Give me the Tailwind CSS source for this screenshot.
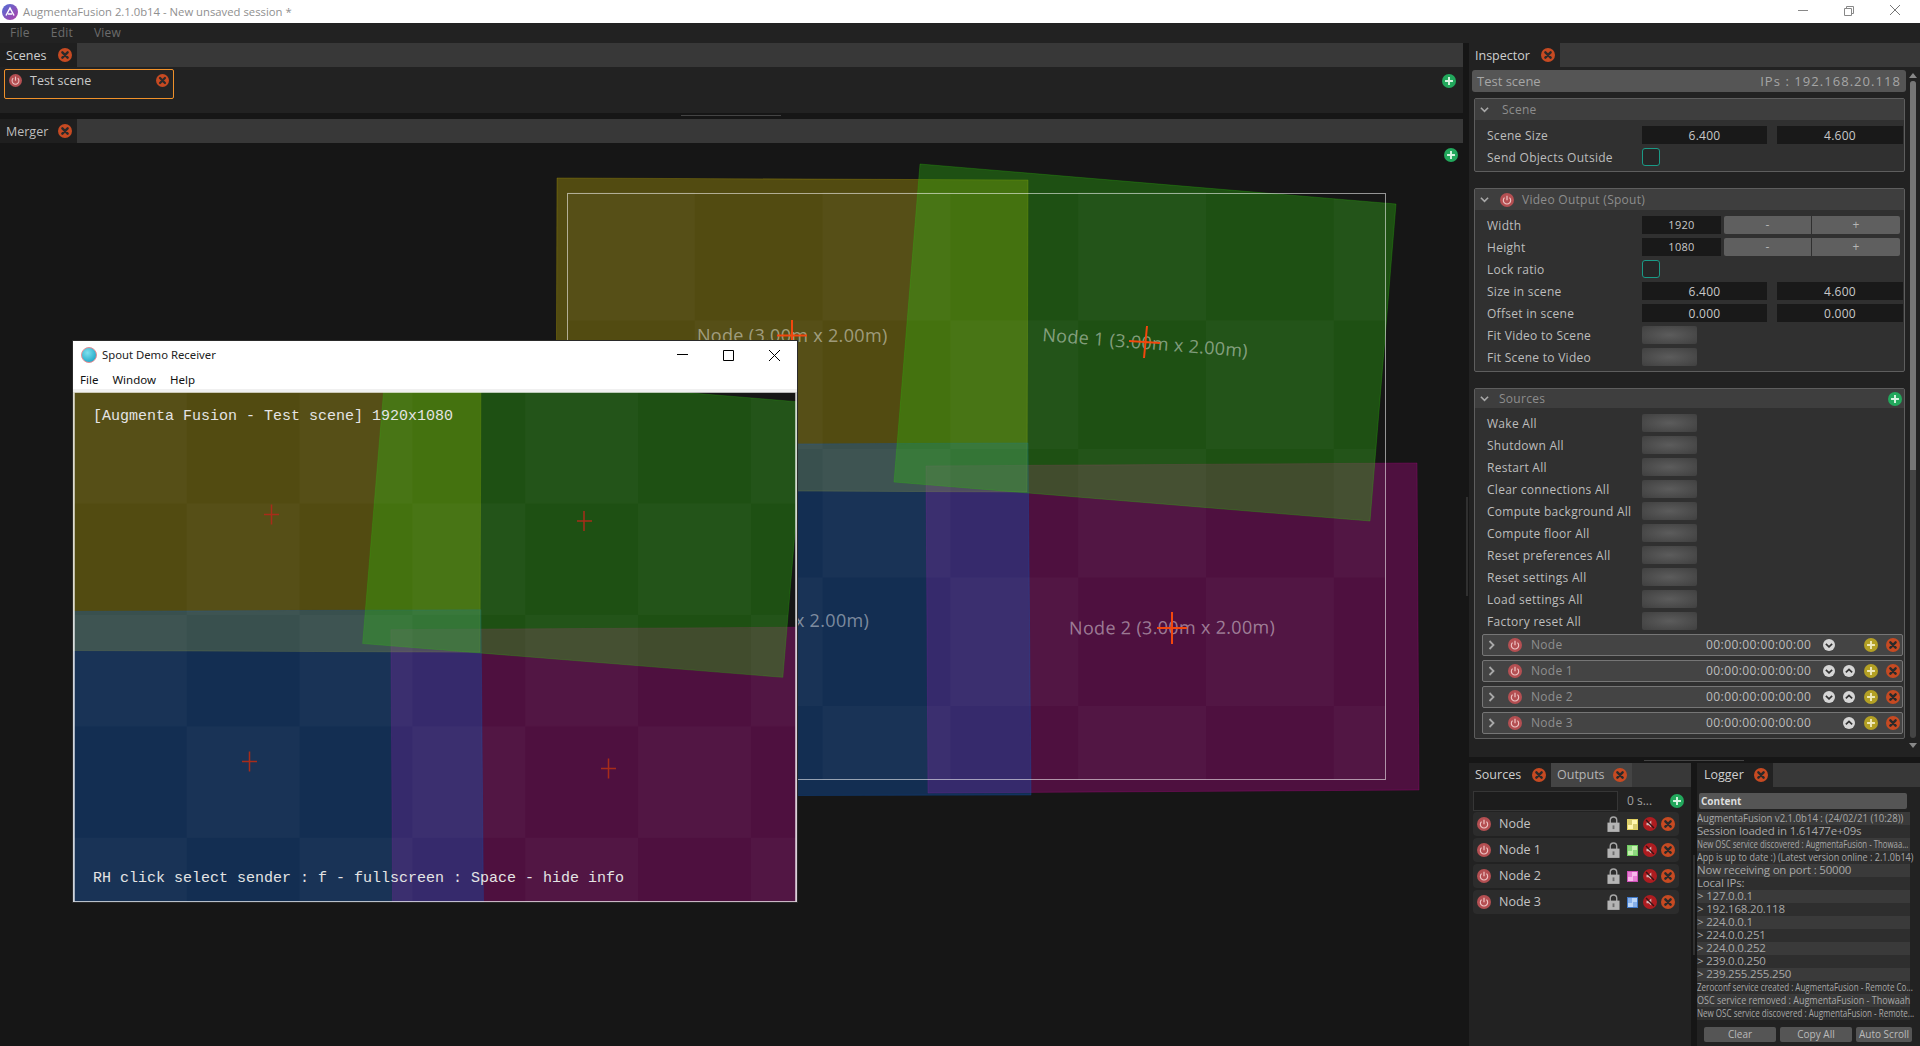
<!DOCTYPE html>
<html lang="en">
<head>
<meta charset="UTF-8" />
<title>AugmentaFusion</title>
<script src="https://cdn.jsdelivr.net/npm/@tailwindcss/browser@4"></script>
</head>
<body class="bg-[#161616] h-[1046px] w-[1920px] overflow-hidden font-['Open_Sans',sans-serif] text-[12px] text-[#bdbdbd] flex flex-col">

<!-- shared icons -->
<svg width="0" height="0" class="absolute">
  <defs>
    <symbol id="i-close" viewBox="0 0 16 16"><circle cx="8" cy="8" r="8" fill="#c64a22"/><path d="M5 5l6 6M11 5l-6 6" stroke="#2a2a2a" stroke-width="2.8" stroke-linecap="round"/></symbol>
    <symbol id="i-power" viewBox="0 0 16 16"><circle cx="8" cy="8" r="8" fill="#b44f52"/><path d="M5.2 5.2a4.2 4.2 0 1 0 5.6 0" fill="none" stroke="#eec4c4" stroke-width="1.3"/><path d="M8 3.2v5" stroke="#eec4c4" stroke-width="1.4"/></symbol>
    <symbol id="i-plus" viewBox="0 0 16 16"><circle cx="8" cy="8" r="8" fill="#22a85c"/><path d="M8 3.5v9M3.5 8h9" stroke="#d8f5e2" stroke-width="2.2"/></symbol>
    <symbol id="i-add" viewBox="0 0 16 16"><circle cx="8" cy="8" r="8" fill="#b3a024"/><path d="M8 3.5v9M3.5 8h9" stroke="#eee8b8" stroke-width="2.2"/></symbol>
    <symbol id="i-down" viewBox="0 0 16 16"><circle cx="8" cy="8" r="8" fill="#d6d6d6"/><path d="M3.8 6.4L8 10.4l4.2-4" fill="none" stroke="#333" stroke-width="2.2"/></symbol>
    <symbol id="i-up" viewBox="0 0 16 16"><circle cx="8" cy="8" r="8" fill="#d6d6d6"/><path d="M3.8 9.8L8 5.8l4.2 4" fill="none" stroke="#333" stroke-width="2.2"/></symbol>
    <symbol id="i-chev-r" viewBox="0 0 8 10"><path d="M1.5 1l4 4-4 4" fill="none" stroke="#a8a8a8" stroke-width="1.8"/></symbol>
    <symbol id="i-chev-d" viewBox="0 0 10 8"><path d="M1 1.5l4 4 4-4" fill="none" stroke="#a8a8a8" stroke-width="1.8"/></symbol>
    <symbol id="i-lock" viewBox="0 0 14 17"><path d="M3.5 8V4.5a3.5 3.5 0 0 1 7 0V8" fill="none" stroke="#a6a6a6" stroke-width="1.5"/><rect x="0.5" y="7" width="13" height="10" fill="#b4b4b4"/><rect x="6" y="10" width="2" height="4" fill="#6d6d6d"/></symbol>
    <symbol id="i-mute" viewBox="0 0 16 16"><circle cx="8" cy="8" r="8" fill="#ae1c20"/><path d="M4 6.5h2.5L9.5 4v8L6.500 9.500H4z" fill="#d9b7b7"/><path d="M3.500 3.500l9 9" stroke="#3a1214" stroke-width="1.600"/></symbol>
  </defs>
</svg>

<!-- title bar -->
<div class="h-[23px] bg-white flex items-center text-[11.3px] text-[#8f8f8f] shrink-0">
  <svg class="ml-[2px] w-[16px] h-[16px]" viewBox="0 0 16 16"><defs><linearGradient id="logo" x1="0" y1="0" x2="1" y2="1"><stop offset="0" stop-color="#4f6fd6"/><stop offset="1" stop-color="#b23fa8"/></linearGradient></defs><circle cx="8" cy="8" r="8" fill="url(#logo)"/><path d="M4 11.500L8 4l4 7.500M6 10h4" fill="none" stroke="#fff" stroke-width="1.500"/></svg>
  <span class="ml-[5px] pt-[1px]">AugmentaFusion 2.1.0b14 - New unsaved session *</span>
  <div class="ml-auto flex items-center">
    <svg class="w-[46px] h-[23px]" viewBox="0 0 46 23"><path d="M18 10.500h10" stroke="#888"/></svg>
    <svg class="w-[46px] h-[23px]" viewBox="0 0 46 23"><path d="M18.500 8.500h7v7h-7zM20.500 8.500v-2h7v7h-2" fill="none" stroke="#888"/></svg>
    <svg class="w-[46px] h-[23px] mr-[2px]" viewBox="0 0 46 23"><path d="M18 5l10 10M28 5l-10 10" stroke="#777"/></svg>
  </div>
</div>

<!-- menu bar -->
<div class="h-[20px] bg-[#222222] flex items-center text-[12px] text-[#6c6c6c] shrink-0 tracking-[0.2px]">
  <span class="ml-[10px]">File</span><span class="ml-[21px]">Edit</span><span class="ml-[21px]">View</span>
</div>

<div class="flex flex-1 min-h-0">
  <!-- left column -->
  <div class="w-[1463px] flex flex-col">
    <div class="h-[24px] bg-[#383838] flex shrink-0">
      <div class="w-[77px] bg-[#1f1f1f] flex items-center pl-[6px] text-[12.5px] text-[#cfcfcf]"><span class="pt-[2px]">Scenes</span><svg class="ml-auto mr-[5px] w-[14px] h-[14px]"><use href="#i-close"/></svg></div>
    </div>
    <div class="h-[46px] bg-[#222222] relative shrink-0 pt-[2px] pl-[4px]">
      <div class="w-[170px] h-[30px] border border-[#f0912a] rounded-[2px] bg-[#242424] flex items-start pt-[3px] pl-[4px] pr-[4px]">
        <svg class="w-[13px] h-[13px] mt-[1px]"><use href="#i-power"/></svg>
        <span class="ml-[8px] text-[12.5px] text-[#c9c9c9] leading-[15px]">Test scene</span>
        <svg class="ml-auto w-[13px] h-[13px] mt-[1px]"><use href="#i-close"/></svg>
      </div>
      <svg class="absolute right-[7px] top-[7px] w-[14px] h-[14px]"><use href="#i-plus"/></svg>
    </div>
    <div class="h-[6px] relative shrink-0"><div class="absolute left-[681px] top-[2px] w-[100px] h-[1px] bg-[#444444]"></div></div>
    <div class="h-[24px] bg-[#383838] flex shrink-0">
      <div class="w-[77px] bg-[#1f1f1f] flex items-center pl-[6px] text-[12.5px] text-[#bdbdbd]"><span class="pt-[2px]">Merger</span><svg class="ml-auto mr-[5px] w-[14px] h-[14px]"><use href="#i-close"/></svg></div>
    </div>

    <!-- merger canvas: items sit at their scene coordinates -->
    <div class="relative flex-1 bg-[#161616] overflow-hidden">
      <svg class="absolute left-0 top-0" width="1463" height="903" viewBox="0 143 1463 903">
        <defs>
          <pattern id="checker" patternUnits="userSpaceOnUse" x="567" y="192" width="255.600" height="257">
            <rect x="0" y="0" width="127.800" height="128.500" fill="#fff" fill-opacity="0.025"/>
            <rect x="127.800" y="128.500" width="127.800" height="128.500" fill="#fff" fill-opacity="0.025"/>
          </pattern>
          <clipPath id="quads">
            <polygon points="926,466 1417,463 1419,790 928,793"/>
            <polygon points="557,178 1028,180 1027,492 556,490"/>
            <polygon points="556,445 1028,443 1031,795 559,796"/>
            <polygon points="920,164 1396,204 1370,521 894,482"/>
          </clipPath>
          <g id="scene">
            <polygon points="926,466 1417,463 1419,790 928,793" fill="rgb(178,6,136)" fill-opacity=".36" stroke="rgb(178,6,136)" stroke-opacity=".3"/>
            <polygon points="557,178 1028,180 1027,492 556,490" fill="rgb(189,169,8)" fill-opacity=".36" stroke="rgb(189,169,8)" stroke-opacity=".3"/>
            <polygon points="556,445 1028,443 1031,795 559,796" fill="rgb(14,89,189)" fill-opacity=".36" stroke="rgb(14,89,189)" stroke-opacity=".3"/>
            <polygon points="920,164 1396,204 1370,521 894,482" fill="rgb(44,183,14)" fill-opacity=".36" stroke="rgb(44,183,14)" stroke-opacity=".3"/>
            <rect x="567" y="192" width="818" height="588" fill="url(#checker)" clip-path="url(#quads)"/>
          </g>
        </defs>
        <use href="#scene"/>
        <rect x="567.500" y="193.500" width="818" height="586" fill="none" stroke="#fff" stroke-opacity=".55"/>
        <g font-size="18" fill="#fff" fill-opacity=".45" font-family="Open Sans" letter-spacing="0.32">
          <text x="697" y="342">Node (3.00m x 2.00m)</text>
          <text transform="translate(1042 341) rotate(4.500)">Node 1 (3.00m x 2.00m)</text>
          <text x="1069" y="634" transform="rotate(-0.300 1172 628)">Node 2 (3.00m x 2.00m)</text>
          <text x="663" y="627">Node 3 (3.00m x 2.00m)</text>
        </g>
        <g stroke="#f2470e" stroke-width="2">
          <path d="M777 335.500h30M792 320v31"/>
          <path d="M1129 341l31 2M1147 326l-3 32"/>
          <path d="M1157 628h30M1172 612v32"/>
        </g>
      </svg>
      <svg class="absolute right-[5px] top-[5px] w-[14px] h-[14px]"><use href="#i-plus"/></svg>

      <!-- spout receiver window -->
      <div class="absolute left-[73px] top-[198px] w-[724px] h-[561px] bg-white flex flex-col shadow-[0_0_0_1px_#2a2a2a] font-['Noto_Sans',sans-serif] text-black">
        <div class="h-[28px] flex items-center shrink-0">
          <svg class="ml-[8px] w-[16px] h-[16px]" viewBox="0 0 16 16"><defs><radialGradient id="ball" cx=".4" cy=".35" r=".7"><stop offset="0" stop-color="#7fe0ee"/><stop offset="1" stop-color="#1ea6c6"/></radialGradient></defs><circle cx="8" cy="8" r="7.500" fill="url(#ball)" stroke="#e88c92"/></svg>
          <span class="ml-[5px] text-[11.3px] text-[#222222]">Spout Demo Receiver</span>
          <div class="ml-auto flex">
            <svg class="w-[46px] h-[28px]" viewBox="0 0 46 28"><path d="M18 13.500h11" stroke="#000"/></svg>
            <svg class="w-[46px] h-[28px]" viewBox="0 0 46 28"><path d="M18.500 9.500h10v10h-10z" fill="none" stroke="#000"/></svg>
            <svg class="w-[46px] h-[28px]" viewBox="0 0 46 28"><path d="M18 9l11 11M29 9l-11 11" stroke="#000"/></svg>
          </div>
        </div>
        <div class="h-[20px] flex items-center text-[11.5px] text-[#111111] shrink-0 pt-[2px]">
          <span class="ml-[7px]">File</span><span class="ml-[14px]">Window</span><span class="ml-[14px]">Help</span>
        </div>
        <div class="h-[3px] bg-[#f0f0f0] shrink-0"></div>
        <div class="relative flex-1 bg-[#161616] overflow-hidden font-['Liberation_Mono',monospace] text-[15px] text-[#e4e4e4]">
          <svg class="absolute left-0 top-0 w-[724px] h-[510px]" viewBox="566 192 820 588" preserveAspectRatio="none">
            <use href="#scene"/>
            <rect x="567" y="192" width="818" height="588" fill="none" stroke="#fff" stroke-opacity=".8" stroke-width="2"/>
          </svg>
          <svg class="absolute left-0 top-0 w-[724px] h-[510px]" viewBox="0 0 724 510">
            <g stroke="#a82c1a" stroke-width="1.500" fill="none">
              <path d="M191 122.500h15M198.500 112.500v20"/>
              <path d="M504 129h15M511 119v20"/>
              <path d="M169 369.500h15M176.500 359.500v20"/>
              <path d="M528 376.500h15M535.500 366.500v20"/>
            </g>
          </svg>
          <span class="absolute left-[20px] top-[14px] whitespace-pre">[Augmenta Fusion - Test scene] 1920x1080</span>
          <span class="absolute left-[20px] top-[476px] whitespace-pre">RH click select sender : f - fullscreen : Space - hide info</span>
        </div>
      </div>
    </div>
  </div>

  <!-- right column -->
  <div class="ml-[6px] w-[451px] flex flex-col relative tracking-[0.28px]">
    <div class="absolute left-[-3px] top-[454px] w-[2px] h-[99px] bg-[#303030]"></div>

    <div class="h-[24px] bg-[#383838] flex shrink-0 tracking-normal">
      <div class="w-[91px] bg-[#222222] flex items-center pl-[6px] text-[12.5px] text-[#cfcfcf]"><span class="pt-[2px]">Inspector</span><svg class="ml-auto mr-[5px] w-[14px] h-[14px]"><use href="#i-close"/></svg></div>
    </div>
    <div class="h-[690px] bg-[#222222] flex shrink-0">
      <div class="w-[437px] pl-[3px]">
        <div class="mt-[3px] h-[22px] bg-[#555555] rounded-[3px] flex items-center justify-between px-[5px] text-[13px] text-[#a6a6a6] tracking-normal">
          <span class="pt-[1px]">Test scene</span><span class="pt-[1px] tracking-[1.05px]">IPs : 192.168.20.118</span>
        </div>

        <!-- Scene -->
        <div class="mt-[6px] ml-[2px] w-[431px] border border-[#5e5e5e] rounded-[2px] bg-[#303030] pb-[3px]">
          <div class="h-[21px] bg-[#3e3e3e] flex items-center pl-[5px] text-[#8d8d8d]"><svg class="w-[9px] h-[8px]"><use href="#i-chev-d"/></svg><span class="ml-[13px]">Scene</span></div>
          <div class="pt-[4px] pl-[12px]">
            <div class="h-[22px] flex items-center"><span class="w-[155px] pt-[1px]">Scene Size</span><div class="w-[125px] h-[18px] bg-[#191919] text-center leading-[19px] text-[#c8c8c8]">6.400</div><div class="ml-[10px] w-[126px] h-[18px] bg-[#191919] text-center leading-[19px] text-[#c8c8c8]">4.600</div></div>
            <div class="h-[22px] flex items-center"><span class="w-[155px] pt-[1px]">Send Objects Outside</span><div class="w-[18px] h-[18px] border border-[#1b9a86] rounded-[3px] bg-[#262626]"></div></div>
          </div>
        </div>

        <!-- Video Output -->
        <div class="mt-[16px] ml-[2px] w-[431px] border border-[#5e5e5e] rounded-[2px] bg-[#303030] pb-[3px]">
          <div class="h-[21px] bg-[#3e3e3e] flex items-center pl-[5px] text-[#8d8d8d]"><svg class="w-[9px] h-[8px]"><use href="#i-chev-d"/></svg><svg class="ml-[11px] w-[14px] h-[14px]"><use href="#i-power"/></svg><span class="ml-[8px]">Video Output (Spout)</span></div>
          <div class="pt-[4px] pl-[12px]">
            <div class="h-[22px] flex items-center"><span class="w-[155px] pt-[1px]">Width</span><div class="w-[79px] h-[18px] bg-[#191919] text-center leading-[18px] text-[11px] text-[#c8c8c8]">1920</div><div class="ml-[3px] w-[87px] h-[18px] bg-[#5f5f5f] rounded-l-[2px] text-center leading-[18px] text-[#b5b5b5]">-</div><div class="ml-[1px] w-[88px] h-[18px] bg-[#5f5f5f] rounded-r-[2px] text-center leading-[18px] text-[#b5b5b5]">+</div></div>
            <div class="h-[22px] flex items-center"><span class="w-[155px] pt-[1px]">Height</span><div class="w-[79px] h-[18px] bg-[#191919] text-center leading-[18px] text-[11px] text-[#c8c8c8]">1080</div><div class="ml-[3px] w-[87px] h-[18px] bg-[#5f5f5f] rounded-l-[2px] text-center leading-[18px] text-[#b5b5b5]">-</div><div class="ml-[1px] w-[88px] h-[18px] bg-[#5f5f5f] rounded-r-[2px] text-center leading-[18px] text-[#b5b5b5]">+</div></div>
            <div class="h-[22px] flex items-center"><span class="w-[155px] pt-[1px]">Lock ratio</span><div class="w-[18px] h-[18px] border border-[#1b9a86] rounded-[3px] bg-[#262626]"></div></div>
            <div class="h-[22px] flex items-center"><span class="w-[155px] pt-[1px]">Size in scene</span><div class="w-[125px] h-[18px] bg-[#191919] text-center leading-[19px] text-[#c8c8c8]">6.400</div><div class="ml-[10px] w-[126px] h-[18px] bg-[#191919] text-center leading-[19px] text-[#c8c8c8]">4.600</div></div>
            <div class="h-[22px] flex items-center"><span class="w-[155px] pt-[1px]">Offset in scene</span><div class="w-[125px] h-[18px] bg-[#191919] text-center leading-[19px] text-[#c8c8c8]">0.000</div><div class="ml-[10px] w-[126px] h-[18px] bg-[#191919] text-center leading-[19px] text-[#c8c8c8]">0.000</div></div>
            <div class="h-[22px] flex items-center"><span class="w-[155px] pt-[1px]">Fit Video to Scene</span><div class="w-[55px] h-[18px] rounded-[2px] bg-[radial-gradient(ellipse_at_center,#5c5c5c,#404040)]"></div></div>
            <div class="h-[22px] flex items-center"><span class="w-[155px] pt-[1px]">Fit Scene to Video</span><div class="w-[55px] h-[18px] rounded-[2px] bg-[radial-gradient(ellipse_at_center,#5c5c5c,#404040)]"></div></div>
          </div>
        </div>

        <!-- Sources -->
        <div class="mt-[16px] ml-[2px] w-[431px] border border-[#5e5e5e] rounded-[2px] bg-[#303030] pb-[4px]">
          <div class="h-[19px] bg-[#3e3e3e] flex items-center pl-[5px] pr-[2px] text-[#8d8d8d]"><svg class="w-[9px] h-[8px]"><use href="#i-chev-d"/></svg><span class="ml-[10px]">Sources</span><svg class="ml-auto w-[14px] h-[14px]"><use href="#i-plus"/></svg></div>
          <div class="pt-[4px] pl-[12px]">
            <div class="h-[22px] flex items-center"><span class="w-[155px] pt-[1px]">Wake All</span><div class="w-[55px] h-[18px] rounded-[2px] bg-[radial-gradient(ellipse_at_center,#5c5c5c,#404040)]"></div></div>
            <div class="h-[22px] flex items-center"><span class="w-[155px] pt-[1px]">Shutdown All</span><div class="w-[55px] h-[18px] rounded-[2px] bg-[radial-gradient(ellipse_at_center,#5c5c5c,#404040)]"></div></div>
            <div class="h-[22px] flex items-center"><span class="w-[155px] pt-[1px]">Restart All</span><div class="w-[55px] h-[18px] rounded-[2px] bg-[radial-gradient(ellipse_at_center,#5c5c5c,#404040)]"></div></div>
            <div class="h-[22px] flex items-center"><span class="w-[155px] pt-[1px]">Clear connections All</span><div class="w-[55px] h-[18px] rounded-[2px] bg-[radial-gradient(ellipse_at_center,#5c5c5c,#404040)]"></div></div>
            <div class="h-[22px] flex items-center"><span class="w-[155px] pt-[1px]">Compute background All</span><div class="w-[55px] h-[18px] rounded-[2px] bg-[radial-gradient(ellipse_at_center,#5c5c5c,#404040)]"></div></div>
            <div class="h-[22px] flex items-center"><span class="w-[155px] pt-[1px]">Compute floor All</span><div class="w-[55px] h-[18px] rounded-[2px] bg-[radial-gradient(ellipse_at_center,#5c5c5c,#404040)]"></div></div>
            <div class="h-[22px] flex items-center"><span class="w-[155px] pt-[1px]">Reset preferences All</span><div class="w-[55px] h-[18px] rounded-[2px] bg-[radial-gradient(ellipse_at_center,#5c5c5c,#404040)]"></div></div>
            <div class="h-[22px] flex items-center"><span class="w-[155px] pt-[1px]">Reset settings All</span><div class="w-[55px] h-[18px] rounded-[2px] bg-[radial-gradient(ellipse_at_center,#5c5c5c,#404040)]"></div></div>
            <div class="h-[22px] flex items-center"><span class="w-[155px] pt-[1px]">Load settings All</span><div class="w-[55px] h-[18px] rounded-[2px] bg-[radial-gradient(ellipse_at_center,#5c5c5c,#404040)]"></div></div>
            <div class="h-[22px] flex items-center"><span class="w-[155px] pt-[1px]">Factory reset All</span><div class="w-[55px] h-[18px] rounded-[2px] bg-[radial-gradient(ellipse_at_center,#5c5c5c,#404040)]"></div></div>
          </div>
          <div class="mt-[2px] ml-[7px] mr-[1px] flex flex-col gap-[4px]">
            <div class="h-[22px] border border-[#767676] rounded-[2px] bg-[#444444] flex items-center pl-[5px]"><svg class="w-[8px] h-[10px]"><use href="#i-chev-r"/></svg><svg class="ml-[12px] w-[14px] h-[14px]"><use href="#i-power"/></svg><span class="ml-[9px] w-[175px] text-[#8f8f8f]">Node</span><span class="w-[106px] text-[#bdbdbd] whitespace-nowrap tracking-[0.42px]">00:00:00:00:00:00</span><svg class="ml-[11px] w-[12px] h-[12px]"><use href="#i-down"/></svg><div class="ml-[8px] w-[12px]"></div><svg class="ml-[9px] w-[14px] h-[14px]"><use href="#i-add"/></svg><svg class="ml-[8px] w-[14px] h-[14px]"><use href="#i-close"/></svg></div>
            <div class="h-[22px] border border-[#767676] rounded-[2px] bg-[#444444] flex items-center pl-[5px]"><svg class="w-[8px] h-[10px]"><use href="#i-chev-r"/></svg><svg class="ml-[12px] w-[14px] h-[14px]"><use href="#i-power"/></svg><span class="ml-[9px] w-[175px] text-[#8f8f8f]">Node 1</span><span class="w-[106px] text-[#bdbdbd] whitespace-nowrap tracking-[0.42px]">00:00:00:00:00:00</span><svg class="ml-[11px] w-[12px] h-[12px]"><use href="#i-down"/></svg><svg class="ml-[8px] w-[12px] h-[12px]"><use href="#i-up"/></svg><svg class="ml-[9px] w-[14px] h-[14px]"><use href="#i-add"/></svg><svg class="ml-[8px] w-[14px] h-[14px]"><use href="#i-close"/></svg></div>
            <div class="h-[22px] border border-[#767676] rounded-[2px] bg-[#444444] flex items-center pl-[5px]"><svg class="w-[8px] h-[10px]"><use href="#i-chev-r"/></svg><svg class="ml-[12px] w-[14px] h-[14px]"><use href="#i-power"/></svg><span class="ml-[9px] w-[175px] text-[#8f8f8f]">Node 2</span><span class="w-[106px] text-[#bdbdbd] whitespace-nowrap tracking-[0.42px]">00:00:00:00:00:00</span><svg class="ml-[11px] w-[12px] h-[12px]"><use href="#i-down"/></svg><svg class="ml-[8px] w-[12px] h-[12px]"><use href="#i-up"/></svg><svg class="ml-[9px] w-[14px] h-[14px]"><use href="#i-add"/></svg><svg class="ml-[8px] w-[14px] h-[14px]"><use href="#i-close"/></svg></div>
            <div class="h-[22px] border border-[#767676] rounded-[2px] bg-[#444444] flex items-center pl-[5px]"><svg class="w-[8px] h-[10px]"><use href="#i-chev-r"/></svg><svg class="ml-[12px] w-[14px] h-[14px]"><use href="#i-power"/></svg><span class="ml-[9px] w-[175px] text-[#8f8f8f]">Node 3</span><span class="w-[106px] text-[#bdbdbd] whitespace-nowrap tracking-[0.42px]">00:00:00:00:00:00</span><div class="ml-[11px] w-[12px]"></div><svg class="ml-[8px] w-[12px] h-[12px]"><use href="#i-up"/></svg><svg class="ml-[9px] w-[14px] h-[14px]"><use href="#i-add"/></svg><svg class="ml-[8px] w-[14px] h-[14px]"><use href="#i-close"/></svg></div>
          </div>
        </div>
      </div>

      <!-- scrollbar -->
      <div class="w-[14px] flex flex-col items-center pt-[6px]">
        <div class="w-0 h-0 border-x-[4px] border-x-transparent border-b-[5px] border-b-[#888888]"></div>
        <div class="mt-[3px] w-[6px] h-[657px] bg-[#444444] rounded-[3px] overflow-hidden"><div class="h-[389px] bg-[#767676]"></div></div>
        <div class="mt-[5px] w-0 h-0 border-x-[4px] border-x-transparent border-t-[5px] border-t-[#888888]"></div>
      </div>
    </div>

    <div class="h-[6px] relative shrink-0"><div class="absolute left-[175px] top-[3px] w-[100px] h-[1px] bg-[#444444]"></div></div>

    <!-- bottom panels -->
    <div class="flex flex-1 min-h-0 tracking-normal">
      <div class="w-[222px] flex flex-col bg-[#222222]">
        <div class="h-[24px] bg-[#383838] flex shrink-0">
          <div class="w-[82px] bg-[#222222] flex items-center pl-[6px] text-[12.5px] text-[#cfcfcf]">Sources<svg class="ml-auto mr-[5px] w-[14px] h-[14px]"><use href="#i-close"/></svg></div>
          <div class="w-[81px] bg-[#444444] flex items-center pl-[6px] text-[12.500px] text-[#b5b5b5]">Outputs<svg class="ml-auto mr-[5px] w-[14px] h-[14px]"><use href="#i-close"/></svg></div>
        </div>
        <div class="h-[25px] flex items-center pl-[4px] pt-[2px]">
          <div class="w-[145px] h-[20px] bg-[#1c1c1c] border border-[#363636]"></div>
          <span class="ml-[9px] text-[#a0a0a0]">0 s...</span>
          <svg class="ml-auto mr-[7px] w-[14px] h-[14px]"><use href="#i-plus"/></svg>
        </div>
        <div class="px-[4px] flex flex-col gap-[2px]">
          <div class="w-[206px] h-[24px] bg-[#2c2c2c] rounded-[4px] flex items-center pl-[4px]"><svg class="w-[14px] h-[14px]"><use href="#i-power"/></svg><span class="ml-[8px] w-[108px] text-[12.5px] text-[#c4c4c4]">Node</span><svg class="w-[13px] h-[16px]"><use href="#i-lock"/></svg><div class="ml-[7px] w-[11px] h-[11px] border border-[#e0d060] bg-[conic-gradient(#fff6b0_25%,#d8cc70_0_50%,#fff6b0_0_75%,#d8cc70_0)]"></div><svg class="ml-[5px] w-[14px] h-[14px]"><use href="#i-mute"/></svg><svg class="ml-[4px] w-[14px] h-[14px]"><use href="#i-close"/></svg></div>
          <div class="w-[206px] h-[24px] bg-[#2c2c2c] rounded-[4px] flex items-center pl-[4px]"><svg class="w-[14px] h-[14px]"><use href="#i-power"/></svg><span class="ml-[8px] w-[108px] text-[12.5px] text-[#c4c4c4]">Node 1</span><svg class="w-[13px] h-[16px]"><use href="#i-lock"/></svg><div class="ml-[7px] w-[11px] h-[11px] border border-[#6fcc60] bg-[conic-gradient(#c6f0b0_25%,#8fd880_0_50%,#c6f0b0_0_75%,#8fd880_0)]"></div><svg class="ml-[5px] w-[14px] h-[14px]"><use href="#i-mute"/></svg><svg class="ml-[4px] w-[14px] h-[14px]"><use href="#i-close"/></svg></div>
          <div class="w-[206px] h-[24px] bg-[#2c2c2c] rounded-[4px] flex items-center pl-[4px]"><svg class="w-[14px] h-[14px]"><use href="#i-power"/></svg><span class="ml-[8px] w-[108px] text-[12.5px] text-[#c4c4c4]">Node 2</span><svg class="w-[13px] h-[16px]"><use href="#i-lock"/></svg><div class="ml-[7px] w-[11px] h-[11px] border border-[#d050b8] bg-[conic-gradient(#f8b8ea_25%,#e880d4_0_50%,#f8b8ea_0_75%,#e880d4_0)]"></div><svg class="ml-[5px] w-[14px] h-[14px]"><use href="#i-mute"/></svg><svg class="ml-[4px] w-[14px] h-[14px]"><use href="#i-close"/></svg></div>
          <div class="w-[206px] h-[24px] bg-[#2c2c2c] rounded-[4px] flex items-center pl-[4px]"><svg class="w-[14px] h-[14px]"><use href="#i-power"/></svg><span class="ml-[8px] w-[108px] text-[12.5px] text-[#c4c4c4]">Node 3</span><svg class="w-[13px] h-[16px]"><use href="#i-lock"/></svg><div class="ml-[7px] w-[11px] h-[11px] border border-[#3f78c8] bg-[conic-gradient(#bcd6f8_25%,#88b0ea_0_50%,#bcd6f8_0_75%,#88b0ea_0)]"></div><svg class="ml-[5px] w-[14px] h-[14px]"><use href="#i-mute"/></svg><svg class="ml-[4px] w-[14px] h-[14px]"><use href="#i-close"/></svg></div>
        </div>
      </div>

      <div class="ml-[6px] flex-1 flex flex-col bg-[#222222] relative">
        <div class="absolute left-[-4px] top-[92px] w-[2px] h-[100px] bg-[#303030]"></div>
        <div class="h-[24px] bg-[#383838] flex shrink-0">
          <div class="w-[76px] bg-[#222222] flex items-center pl-[7px] text-[12.5px] text-[#cfcfcf]">Logger<svg class="ml-auto mr-[5px] w-[14px] h-[14px]"><use href="#i-close"/></svg></div>
        </div>
        <div class="mt-[6px] ml-[2px] w-[208px] h-[16px] bg-[#555555] rounded-[2px] pl-[2px] text-[10px] leading-[16px] font-bold text-[#dddddd]">Content</div>
        <div class="mt-[3px] w-[213px] text-[11px] leading-[12px] text-[#a8a8a8]">
          <div class="h-[13px] bg-[#3a3a3a] whitespace-nowrap"><span class="inline-block origin-left scale-x-[.87]">AugmentaFusion v2.1.0b14 : (24/02/21 (10:28))</span></div>
          <div class="h-[13px] bg-[#2e2e2e] whitespace-nowrap text-[11.5px] tracking-[-0.2px]">Session loaded in 1.61477e+09s</div>
          <div class="h-[13px] bg-[#3a3a3a] whitespace-nowrap"><span class="inline-block origin-left scale-x-[.71]">New OSC service discovered : AugmentaFusion - Thowaa...</span></div>
          <div class="h-[13px] bg-[#2e2e2e] whitespace-nowrap"><span class="inline-block origin-left scale-x-[.82]">App is up to date :) (Latest version online : 2.1.0b14)</span></div>
          <div class="h-[13px] bg-[#3a3a3a] whitespace-nowrap text-[11.5px] tracking-[-0.2px]">Now receiving on port : 50000</div>
          <div class="h-[13px] bg-[#2e2e2e] whitespace-nowrap text-[11.5px] tracking-[-0.2px]">Local IPs:</div>
          <div class="h-[13px] bg-[#3a3a3a] whitespace-nowrap text-[11.5px] tracking-[-0.2px]">&gt; 127.0.0.1</div>
          <div class="h-[13px] bg-[#2e2e2e] whitespace-nowrap text-[11.5px] tracking-[-0.2px]">&gt; 192.168.20.118</div>
          <div class="h-[13px] bg-[#3a3a3a] whitespace-nowrap text-[11.5px] tracking-[-0.2px]">&gt; 224.0.0.1</div>
          <div class="h-[13px] bg-[#2e2e2e] whitespace-nowrap text-[11.5px] tracking-[-0.2px]">&gt; 224.0.0.251</div>
          <div class="h-[13px] bg-[#3a3a3a] whitespace-nowrap text-[11.5px] tracking-[-0.2px]">&gt; 224.0.0.252</div>
          <div class="h-[13px] bg-[#2e2e2e] whitespace-nowrap text-[11.5px] tracking-[-0.2px]">&gt; 239.0.0.250</div>
          <div class="h-[13px] bg-[#3a3a3a] whitespace-nowrap text-[11.5px] tracking-[-0.2px]">&gt; 239.255.255.250</div>
          <div class="h-[13px] bg-[#2e2e2e] whitespace-nowrap"><span class="inline-block origin-left scale-x-[.73]">Zeroconf service created : AugmentaFusion - Remote Co...</span></div>
          <div class="h-[13px] bg-[#3a3a3a] whitespace-nowrap"><span class="inline-block origin-left scale-x-[.82]">OSC service removed : AugmentaFusion - Thowaah</span></div>
          <div class="h-[13px] bg-[#2e2e2e] whitespace-nowrap"><span class="inline-block origin-left scale-x-[.73]">New OSC service discovered : AugmentaFusion - Remote...</span></div>
        </div>
        <div class="mt-[7px] ml-[7px] flex gap-[4px] text-[10px] text-[#bbbbbb]">
          <div class="w-[72px] h-[15px] bg-[#555555] rounded-[2px] text-center leading-[15px]">Clear</div>
          <div class="w-[72px] h-[15px] bg-[#555555] rounded-[2px] text-center leading-[15px]">Copy All</div>
          <div class="w-[56px] h-[15px] bg-[#555555] rounded-[2px] text-center leading-[15px]">Auto Scroll</div>
        </div>
      </div>
    </div>
  </div>
</div>
</body>
</html>
